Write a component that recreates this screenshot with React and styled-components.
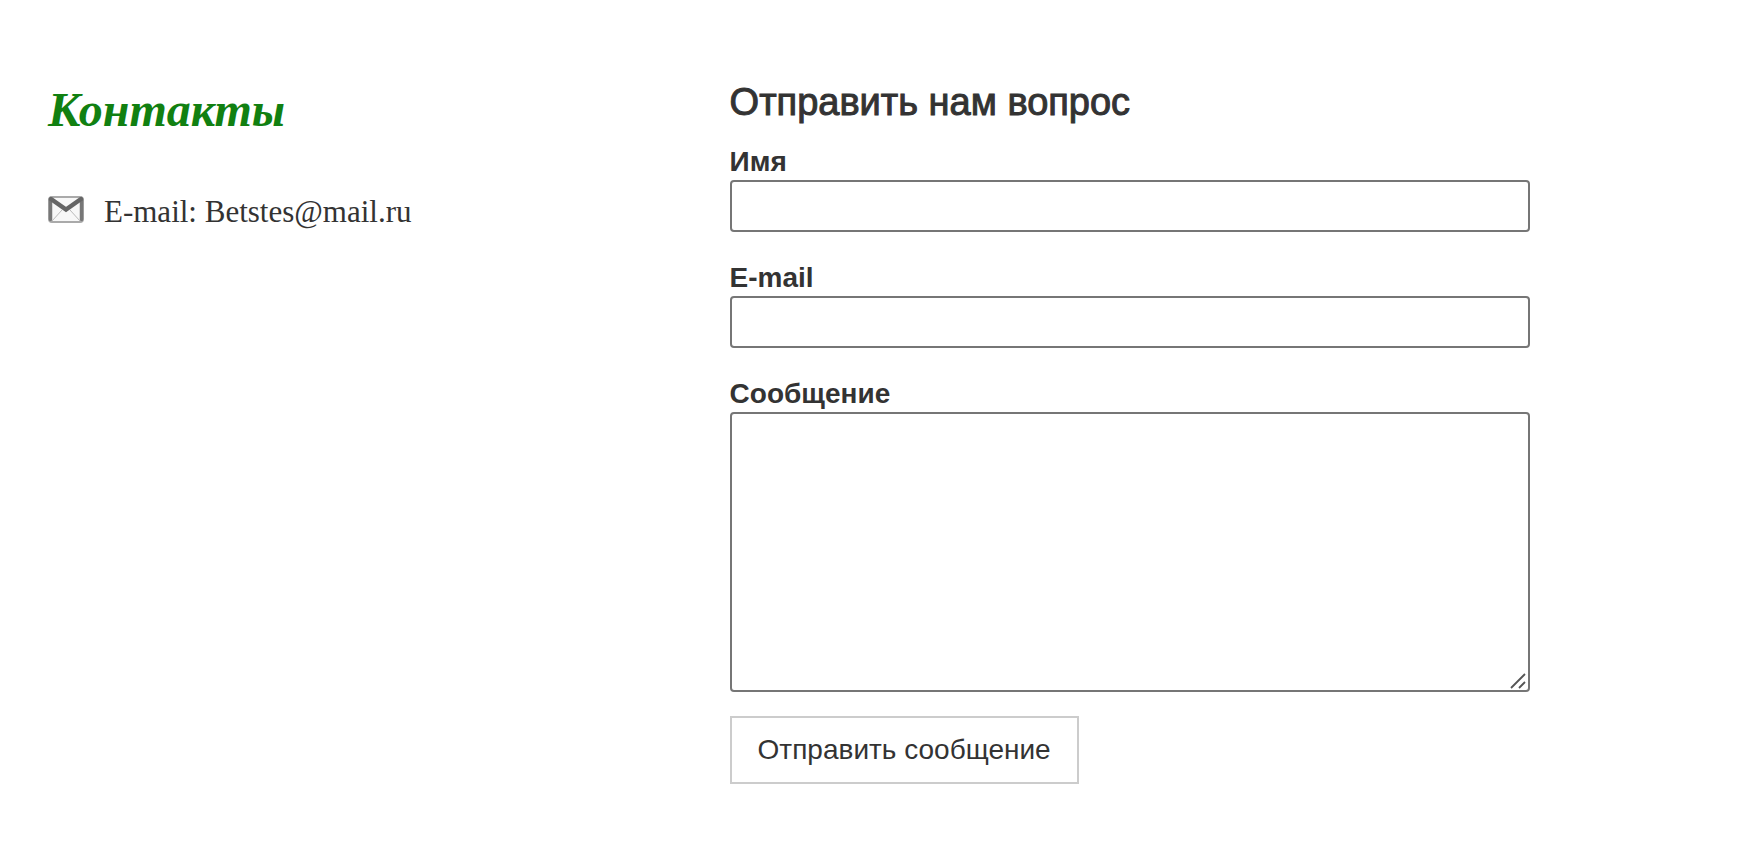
import styled, { createGlobalStyle } from "styled-components";

const GlobalStyle = createGlobalStyle`
  * {
    box-sizing: border-box;
  }

  body {
    margin: 0;
    background-color: #fff;
    color: #333;
    font-family: "Liberation Sans", Arial, sans-serif;
    font-size: 28px;
    line-height: 32px;
  }
`;

const Wrapper = styled.main`
  display: grid;
  grid-template-columns: 2fr 3fr;
  align-items: start;
  padding: 80px 0 60px 44px;
`;

const Info = styled.section`
  display: flex;
  flex-direction: column;
  gap: 48px;
  padding-left: 4px;
  font-family: "Liberation Serif", "Times New Roman", serif;
`;

const Title = styled.h1`
  margin: 0;
  font-size: 48px;
  line-height: 60px;
  font-style: italic;
  font-weight: bold;
  color: #118011;
`;

const MailRow = styled.p`
  display: flex;
  align-items: flex-start;
  gap: 20px;
  margin: 0;
  font-size: 31px;
  line-height: 48px;

  svg {
    margin-top: 8px;
  }
`;

const Form = styled.form`
  display: flex;
  flex-direction: column;
  align-items: flex-start;
  gap: 32px;
  padding-right: 48px;
`;

const FormTitle = styled.h2`
  margin: 0 0 -8px;
  font-size: 38px;
  line-height: 44px;
  font-weight: normal;
  -webkit-text-stroke: 1px #333;
`;

const Field = styled.div`
  display: flex;
  flex-direction: column;
  width: 100%;
  max-width: 800px;

  label {
    padding-bottom: 4px;
    line-height: 28px;
    font-weight: bold;
  }

  input,
  textarea {
    display: block;
    width: 100%;
    height: 52px;
    padding: 4px 8px;
    border: 2px solid #767676;
    border-radius: 4px;
    background-color: #fff;
    color: inherit;
    font: inherit;
  }

  textarea {
    height: 280px;
    resize: none;
  }
`;

const MessageBox = styled.div`
  position: relative;

  svg {
    position: absolute;
    right: 4px;
    bottom: 3px;
    pointer-events: none;
  }
`;

const SubmitButton = styled.button`
  margin-top: -8px;
  padding: 16px 26px;
  border: 2px solid #ccc;
  background-color: #fff;
  color: inherit;
  font: inherit;
  cursor: pointer;
`;

const MailIcon = () => (
  <svg width="36" height="27" viewBox="0 0 36 27" fill="none" aria-hidden="true">
    <rect x="1" y="1" width="34" height="25" rx="3" fill="#f8f8f8" stroke="#aaa" strokeWidth="2" />
    <path d="M4 25L14 14M32 25L22 14" stroke="#bbb" />
    <path d="M2.500 4V23.500M33.500 4V23.500" stroke="#777" strokeWidth="3.500" strokeLinecap="round" />
    <path d="M3 3L18 13.500L33 3" stroke="#666" strokeWidth="4.500" strokeLinecap="round" />
  </svg>
);

const ResizeGrip = () => (
  <svg width="16" height="16" viewBox="0 0 16 16" stroke="#555" strokeWidth="1.800" aria-hidden="true">
    <path d="M1 15L15 1M9 15L15 9" />
  </svg>
);

const App = () => {
  return (
    <>
      <GlobalStyle />
      <Wrapper>
        <Info>
          <Title>Контакты</Title>
          <MailRow>
            <MailIcon />
            <span>E-mail: Betstes@mail.ru</span>
          </MailRow>
        </Info>

        <Form onSubmit={(e) => e.preventDefault()}>
          <FormTitle>Отправить нам вопрос</FormTitle>
          <Field>
            <label htmlFor="name">Имя</label>
            <input id="name" type="text" name="name" autoComplete="off" />
          </Field>
          <Field>
            <label htmlFor="email">E-mail</label>
            <input id="email" type="email" name="email" autoComplete="off" />
          </Field>
          <Field>
            <label htmlFor="message">Сообщение</label>
            <MessageBox>
              <textarea id="message" name="message"></textarea>
              <ResizeGrip />
            </MessageBox>
          </Field>
          <SubmitButton type="submit">Отправить сообщение</SubmitButton>
        </Form>
      </Wrapper>
    </>
  );
};

export default App;
